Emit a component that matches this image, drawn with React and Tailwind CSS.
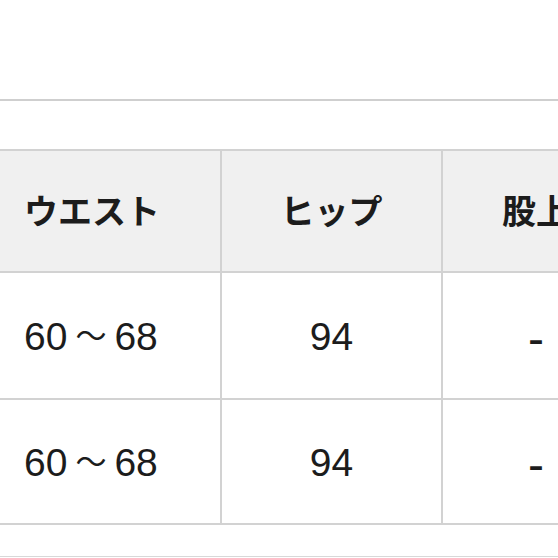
export default function App() {
  const font = { fontFamily: '"Liberation Sans", "Noto Sans CJK JP", sans-serif' };
  const rows = [
    { h: "h-[127px]", v: ["60", "68", "94", "-"] },
    { h: "h-[125px]", v: ["60", "68", "94", "-"] },
  ];
  return (
    <div
      className="w-[558px] h-[558px] overflow-hidden bg-white text-[#1c1c1c]"
      style={font}
    >
      <div className="h-[99px]" />
      <div className="h-[2px] bg-[#cfcfcf]" />
      <div className="h-[48px]" />
      <div className="w-[700px] border-t-2 border-[#d2d2d2]">
        <div className="flex h-[122px] bg-[#f0f0f0] border-b-2 border-[#d2d2d2]">
          <div className="w-[222px] shrink-0 border-r-2 border-[#d2d2d2] flex items-center pl-[24px] pt-[2px] text-[34px] font-bold">
            ウエスト
          </div>
          <div className="w-[221px] shrink-0 border-r-2 border-[#d2d2d2] flex items-center justify-center pt-[2px] text-[34px] font-bold">
            ヒップ
          </div>
          <div className="w-[186px] shrink-0 flex items-center justify-center pt-[2px] text-[34px] font-bold">
            股上
          </div>
        </div>
        {rows.map((r, i) => (
          <div key={i} className={`flex ${r.h} border-b-2 border-[#d2d2d2]`}>
            <div className="w-[222px] shrink-0 border-r-2 border-[#d2d2d2] flex items-center pl-[24px] pt-[4px] text-[39px]">
              <span>{r.v[0]}</span>
              <span className="mx-[8px] text-[31px]">～</span>
              <span>{r.v[1]}</span>
            </div>
            <div className="w-[221px] shrink-0 border-r-2 border-[#d2d2d2] flex items-center justify-center pt-[4px] text-[39px]">
              {r.v[2]}
            </div>
            <div className="w-[186px] shrink-0 flex items-center justify-center text-[48px] pt-[6px]">
              {r.v[3]}
            </div>
          </div>
        ))}
      </div>
      <div className="h-[31px]" />
      <div className="h-[1px] bg-[#d8d8d8]" />
    </div>
  );
}
